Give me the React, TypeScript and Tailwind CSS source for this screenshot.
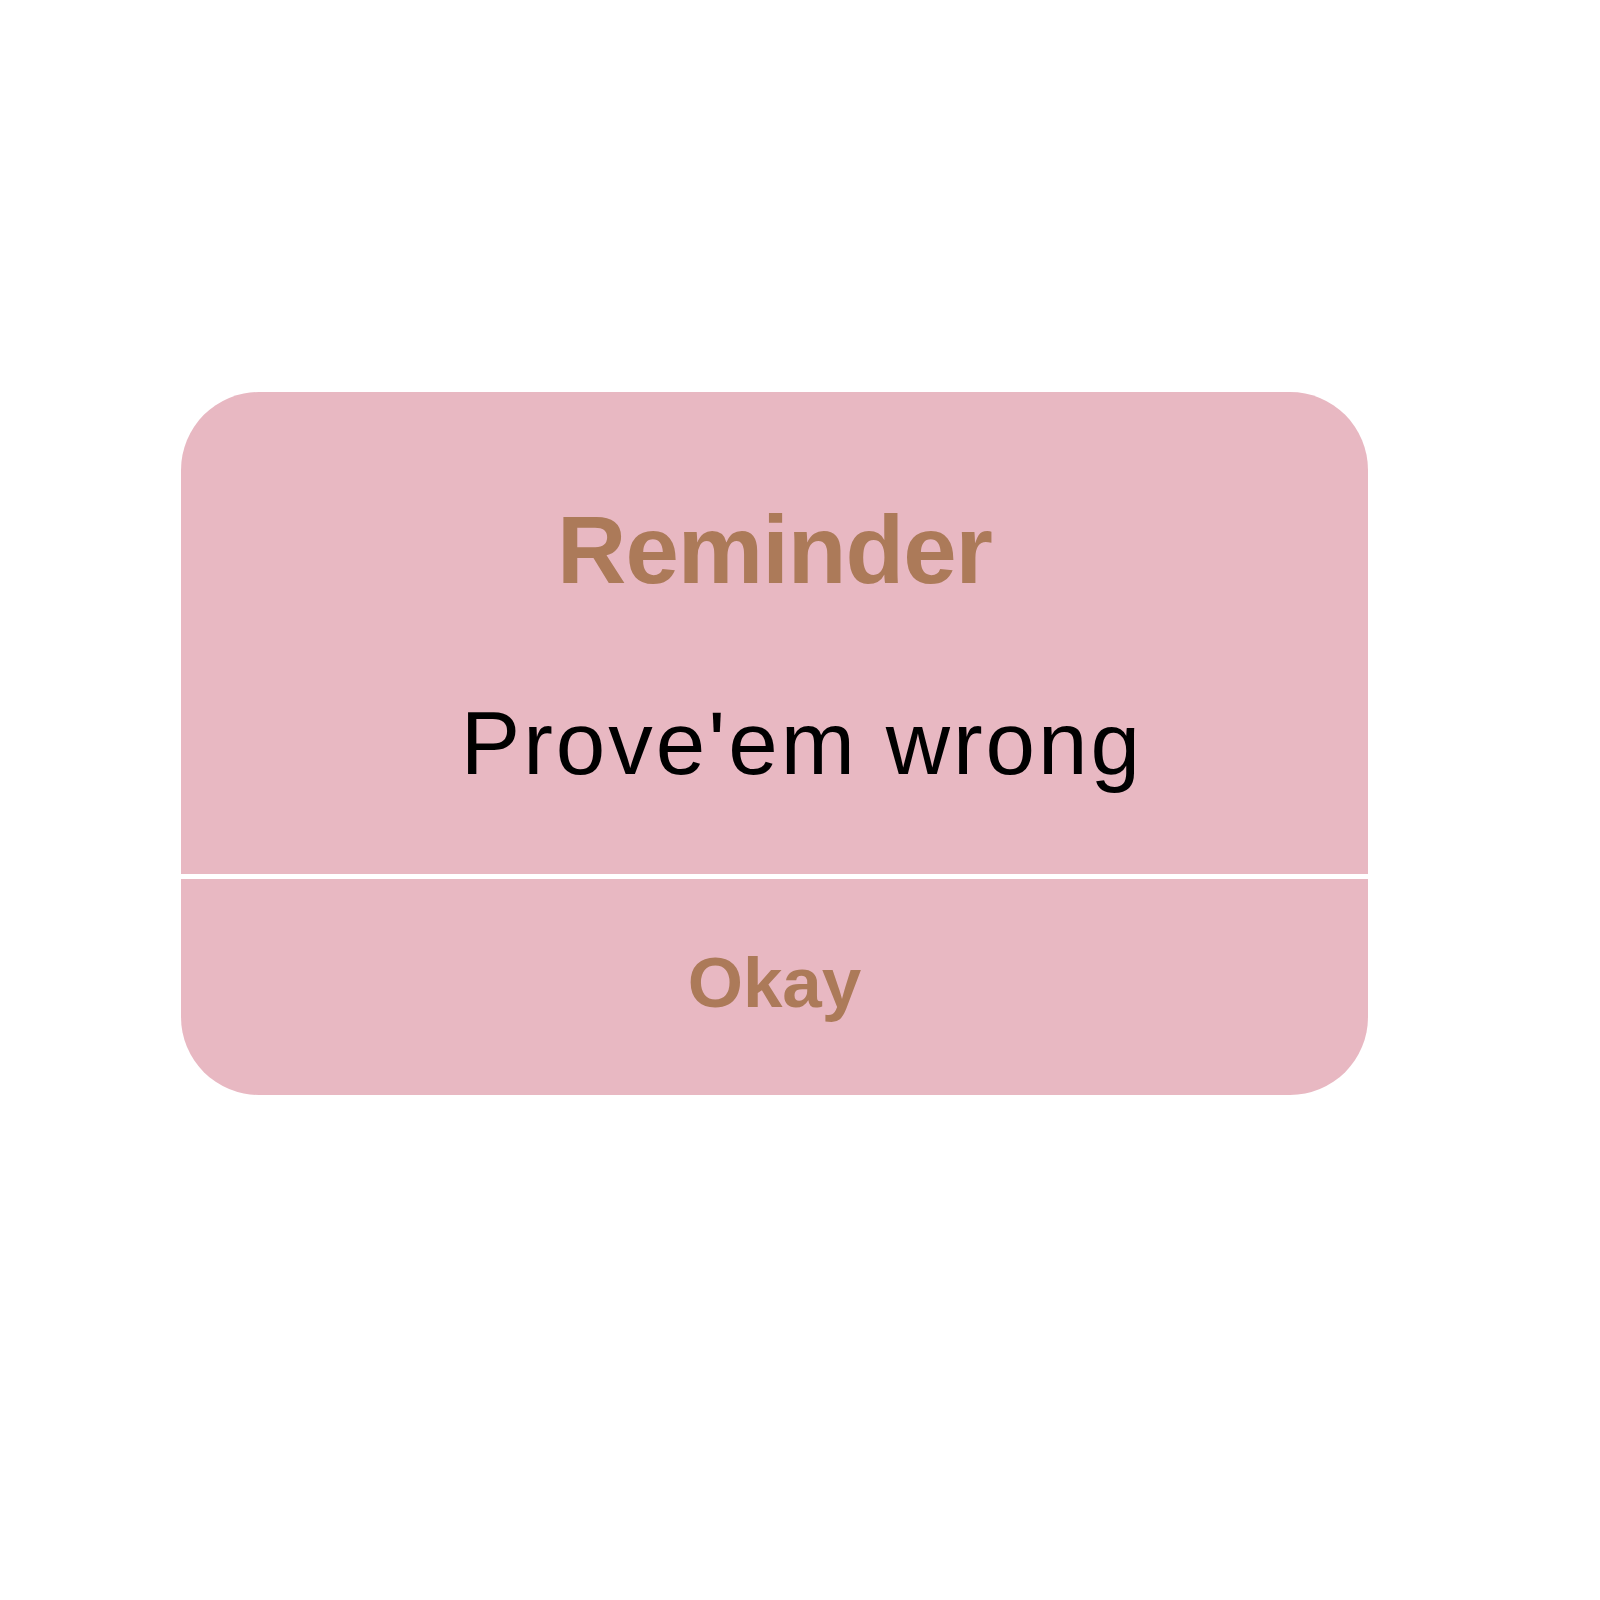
const ReminderAlert = () => {
    return (
        <div className="min-h-[1600px] w-full bg-white pt-[392px] pl-[181px]">
            <div className="flex h-[703px] w-[1187px] flex-col overflow-hidden rounded-[78px] bg-[#e8b8c2]">
                <div className="flex flex-col items-center pt-[110px] pb-[86px]">
                    <h1 className="font-['Liberation_Sans',Arial,sans-serif] text-[96px] font-bold leading-none tracking-[-1px] text-[#ac7a59]">
                        Reminder
                    </h1>
                    <p className="mt-[101px] pl-[55px] font-['Liberation_Sans',Arial,sans-serif] text-[89px] leading-none tracking-[3px] text-black">
                        Prove'em wrong
                    </p>
                </div>
                <hr className="h-[5px] border-0 bg-white" />
                <button
                    type="button"
                    className="flex flex-1 justify-center pt-[68px] font-['Liberation_Sans',Arial,sans-serif] text-[71px] font-bold leading-none text-[#ac7a59]"
                >
                    Okay
                </button>
            </div>
        </div>
    );
};

export default function App() {
    return <ReminderAlert />;
}
